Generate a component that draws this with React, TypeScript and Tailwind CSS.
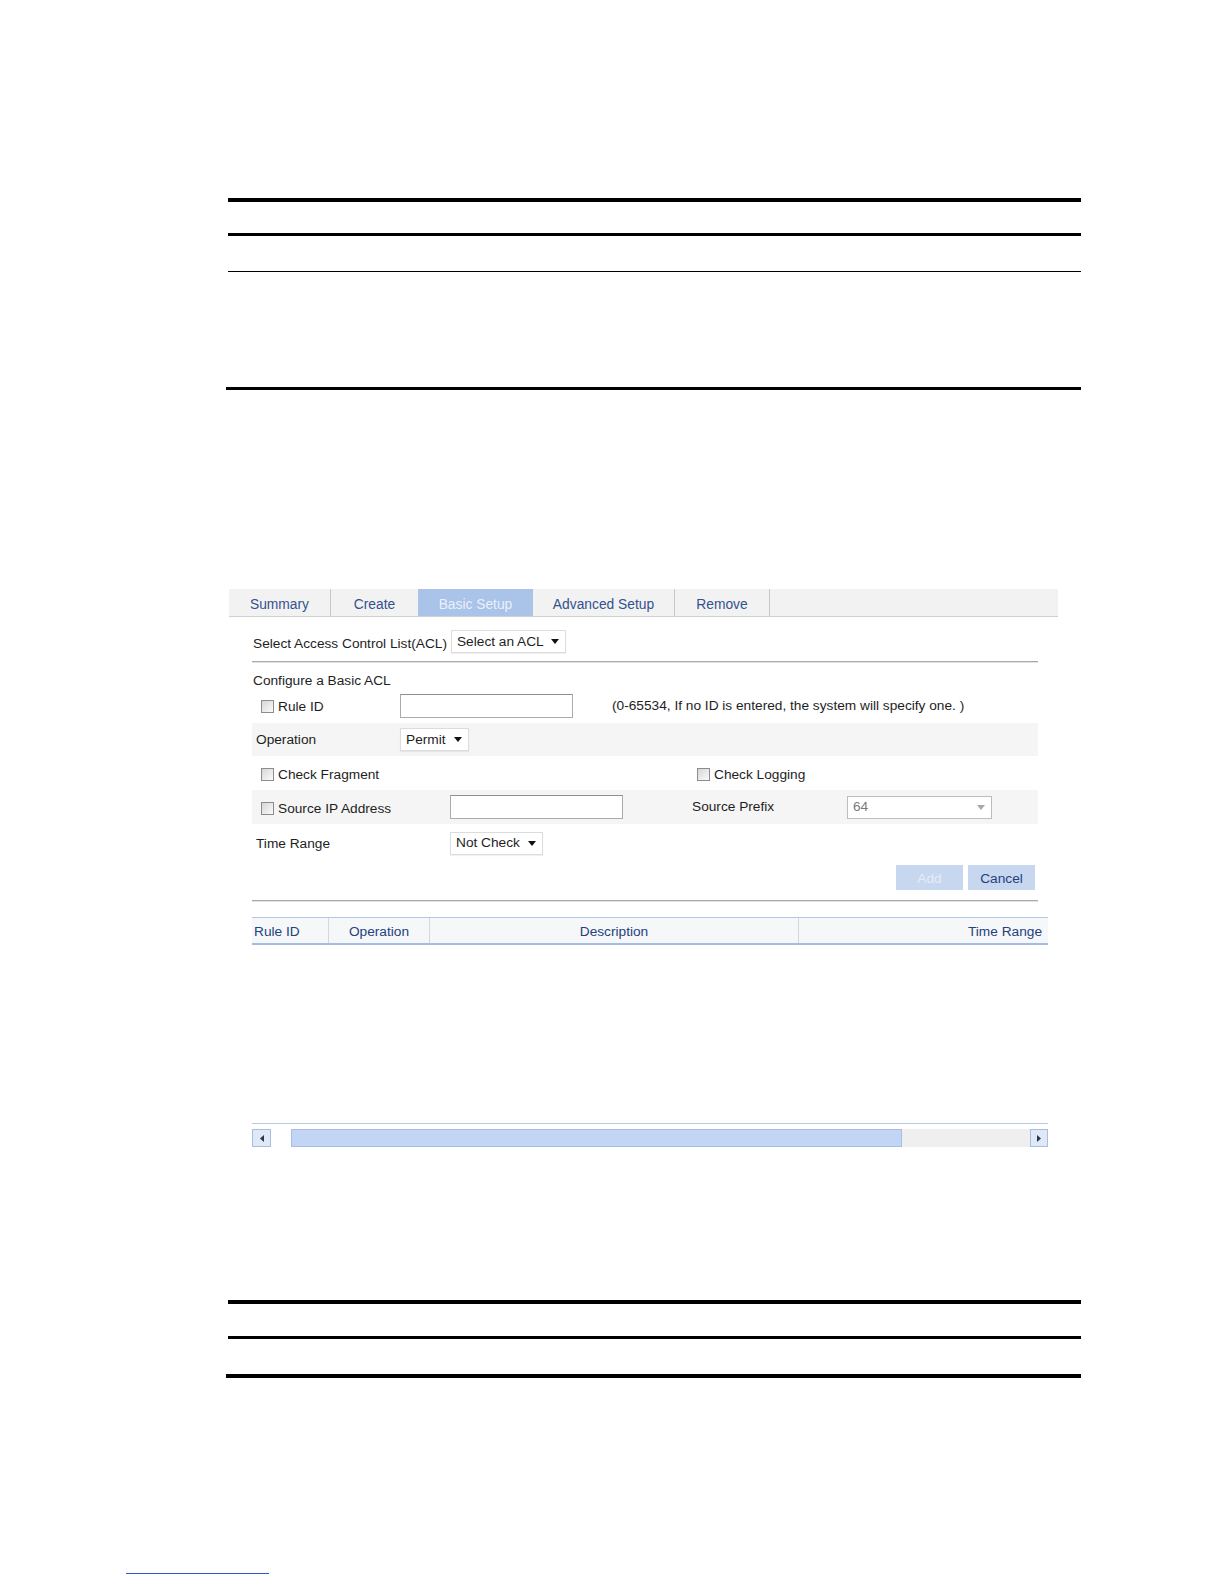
import React from "react";

const Arrow = ({ color = "#111111" }: { color?: string }) => (
  <svg width="8" height="5" viewBox="0 0 8 5" className="shrink-0">
    <path d="M0 0H8L4 5Z" fill={color} />
  </svg>
);

const Check = () => (
  <span className="inline-block w-[13px] h-[13px] shrink-0 border border-[#8c8c8c] bg-linear-to-br from-[#d6d6d6] to-[#fbfbfb]" />
);

const Select = ({ w, text }: { w: string; text: string }) => (
  <div className={`flex items-center justify-between h-[23px] border border-[#dcdcdc] bg-white pl-[5px] pr-[6px] shadow-[0_1px_1px_rgba(0,0,0,0.06)] ${w}`}>
    <span className="pt-[1px]">{text}</span>
    <Arrow />
  </div>
);

const Input = ({ w }: { w: string }) => (
  <div className={`h-[24px] border border-[#ababab] border-t-[#8f8f8f] bg-white ${w}`} />
);

const Line = ({ cls }: { cls: string }) => <div className={`bg-black ${cls}`} />;

export default function App() {
  return (
    <div className="w-[1224px] h-[1584px] bg-white flex flex-col items-start font-['Liberation_Sans',Arial,sans-serif] text-[13.7px] text-[#1e1e1e] overflow-hidden">
      {/* top table rules */}
      <Line cls="mt-[198px] ml-[228px] w-[853px] h-[4px]" />
      <Line cls="mt-[31px] ml-[228px] w-[853px] h-[3px]" />
      <Line cls="mt-[35px] ml-[228px] w-[853px] h-[1px]" />
      <Line cls="mt-[115px] ml-[226px] w-[855px] h-[3px]" />

      {/* UI panel */}
      <div className="mt-[199px] ml-[229px] flex flex-col">
        {/* tabs */}
        <div className="flex w-[829px] h-[28px] bg-[#f2f2f2] border-b border-[#cfcfcf] text-[#34518f] text-[13.8px]">
          <div className="w-[102px] border-r border-[#c8c8c8] flex items-center justify-center pt-[6px]">Summary</div>
          <div className="w-[87px] flex items-center justify-center pt-[6px]">Create</div>
          <div className="w-[115px] bg-[#a9c3e9] text-[#eaf1fb] flex items-center justify-center pt-[6px]">Basic Setup</div>
          <div className="w-[142px] border-r border-[#c8c8c8] flex items-center justify-center pt-[6px]">Advanced Setup</div>
          <div className="w-[95px] border-r border-[#c8c8c8] flex items-center justify-center pt-[6px]">Remove</div>
        </div>

        {/* form */}
        <div className="ml-[23px] w-[796px] flex flex-col">
          <div className="mt-[13px] h-[23px] flex items-center">
            <span className="ml-[1px] pt-[6px]">Select Access Control List(ACL)</span>
            <Select w="ml-[4px] w-[115px]" text="Select an ACL" />
          </div>

          <div className="mt-[8px] w-[786px] h-[2px] border-t border-[#a9a9a9] border-b border-b-[#e2e2e2]" />

          <div className="mt-[8px] h-[20px] leading-[20px] ml-[1px]">Configure a Basic ACL</div>

          {/* Rule ID */}
          <div className="h-[29px] w-[786px] flex items-center">
            <div className="w-[148px] flex items-center pl-[9px] gap-[4px] pt-[3px]">
              <Check />
              <span className="pt-[1px]">Rule ID</span>
            </div>
            <Input w="w-[173px]" />
            <span className="ml-[39px] pt-[1px]">(0-65534, If no ID is entered, the system will specify one. )</span>
          </div>

          {/* Operation */}
          <div className="mt-[3px] h-[33px] w-[786px] bg-[#f5f5f5] flex items-center">
            <span className="w-[148px] pl-[4px] pt-[1px]">Operation</span>
            <Select w="w-[69px]" text="Permit" />
          </div>

          {/* Check Fragment */}
          <div className="h-[34px] w-[786px] flex items-center pt-[3px]">
            <div className="w-[445px] flex items-center pl-[9px] gap-[4px]">
              <Check />
              <span className="pt-[1px]">Check Fragment</span>
            </div>
            <div className="flex items-center gap-[4px]">
              <Check />
              <span className="pt-[1px]">Check Logging</span>
            </div>
          </div>

          {/* Source IP */}
          <div className="h-[34px] w-[786px] bg-[#f5f5f5] flex items-center">
            <div className="w-[198px] flex items-center pl-[9px] gap-[4px] pt-[3px]">
              <Check />
              <span className="pt-[1px]">Source IP Address</span>
            </div>
            <Input w="w-[173px]" />
            <span className="ml-[69px] w-[155px] pt-[1px]">Source Prefix</span>
            <div className="flex items-center justify-between h-[23px] w-[145px] border border-[#bdbdbd] bg-white pl-[5px] pr-[6px] text-[#7a7a7a]">
              <span className="pt-[1px]">64</span>
              <Arrow color="#a8a8a8" />
            </div>
          </div>

          {/* Time Range */}
          <div className="h-[38px] w-[786px] flex items-center">
            <span className="w-[198px] pl-[4px] pt-[2px]">Time Range</span>
            <Select w="w-[93px]" text="Not Check" />
          </div>

          {/* Buttons */}
          <div className="mt-[3px] h-[25px] w-[786px] flex justify-end gap-[5px] pr-[3px]">
            <div className="w-[67px] h-[25px] bg-[#c7d7ef] text-[#e6ecf6] flex items-center justify-center pt-[4px]">Add</div>
            <div className="w-[67px] h-[25px] bg-[#c7d7ef] text-[#23427e] flex items-center justify-center pt-[4px]">Cancel</div>
          </div>

          <div className="mt-[10px] w-[786px] h-[2px] border-t border-[#a9a9a9] border-b border-b-[#e2e2e2]" />

          {/* table header */}
          <div className="mt-[15px] h-[28px] w-[796px] flex bg-[#f6f7f9] border-t border-[#b3c8e6] border-b-2 border-b-[#a3bde3] text-[#23427e]">
            <div className="w-[77px] border-r border-[#d3d8df] flex items-center pl-[2px] pt-[4px]">Rule ID</div>
            <div className="w-[101px] border-r border-[#d3d8df] flex items-center justify-center pt-[4px]">Operation</div>
            <div className="w-[369px] border-r border-[#d3d8df] flex items-center justify-center pt-[4px]">Description</div>
            <div className="flex-1 flex items-center justify-end pr-[6px] pt-[4px]">Time Range</div>
          </div>

          <div className="mt-[178px] w-[796px] h-[1px] bg-[#b6c9e6]" />

          {/* scrollbar */}
          <div className="mt-[5px] h-[18px] w-[796px] flex">
            <div className="w-[19px] h-[18px] border border-[#a9bde0] bg-[#dfe8f7] flex items-center justify-center">
              <svg width="4" height="7" viewBox="0 0 4 7"><path d="M4 0V7L0 3.5Z" fill="#2a3550" /></svg>
            </div>
            <div className="w-[20px] bg-white" />
            <div className="w-[611px] h-[18px] bg-[#c3d5f5] border border-[#a6bde6]" />
            <div className="flex-1 bg-[#efefef]" />
            <div className="w-[18px] h-[18px] border border-[#a9bde0] bg-[#dfe8f7] flex items-center justify-center">
              <svg width="4" height="7" viewBox="0 0 4 7"><path d="M0 0V7L4 3.5Z" fill="#2a3550" /></svg>
            </div>
          </div>
        </div>
      </div>

      {/* bottom table rules */}
      <Line cls="mt-[153px] ml-[228px] w-[853px] h-[4px]" />
      <Line cls="mt-[32px] ml-[228px] w-[853px] h-[3px]" />
      <Line cls="mt-[35px] ml-[226px] w-[855px] h-[4px]" />

      {/* footer link underline */}
      <div className="mt-[195px] ml-[126px] w-[143px] h-[1px] bg-[#3355cc]" />
    </div>
  );
}
